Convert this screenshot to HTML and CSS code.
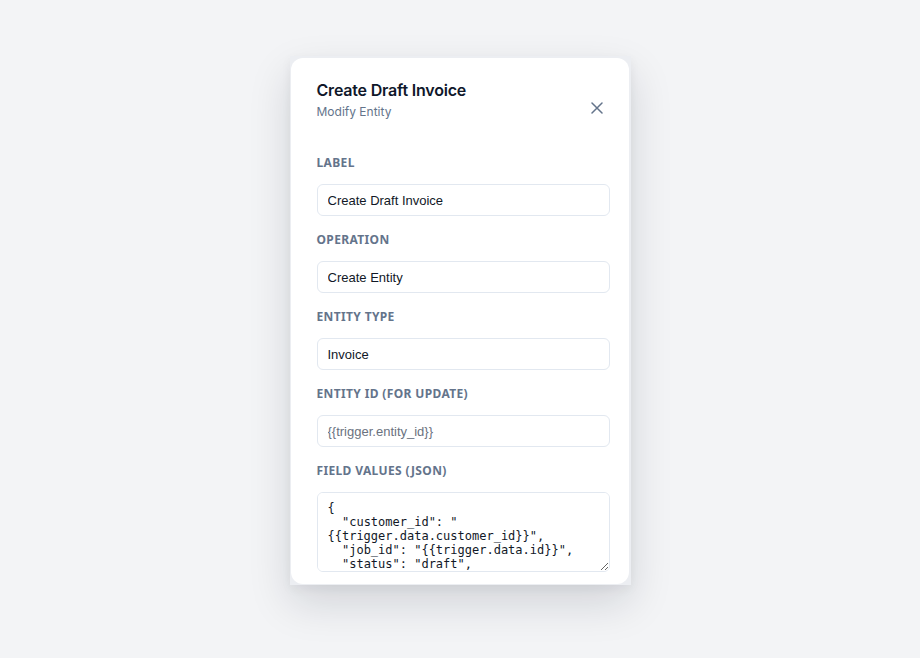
FILE: index.html
```html
<!DOCTYPE html>
<html lang="en">
<head>
  <meta charset="UTF-8">
  <title>Create Draft Invoice</title>
  <link rel="stylesheet" href="styles.css">
</head>

<body>

<div class="modal-frame">
  <div class="modal">
    <div class="modal-header">
      <div>
        <h2>Create Draft Invoice</h2>
        <p class="subtitle">Modify Entity</p>
      </div>
      <button type="button" class="close-btn" aria-label="Close">
        <svg width="12" height="12" viewBox="0 0 12 12" fill="none">
          <path d="M1 1L11 11M11 1L1 11" stroke="#64748b" stroke-width="1.5" stroke-linecap="round"/>
        </svg>
      </button>
    </div>

    <div class="modal-body">
      <div class="field">
        <label for="label">Label</label>
        <input type="text" id="label" value="Create Draft Invoice">
      </div>

      <div class="field">
        <label for="operation">Operation</label>
        <input type="text" id="operation" value="Create Entity">
      </div>

      <div class="field">
        <label for="entityType">Entity Type</label>
        <input type="text" id="entityType" value="Invoice">
      </div>

      <div class="field">
        <label for="entityId">Entity ID (for update)</label>
        <input type="text" id="entityId" placeholder="{{trigger.entity_id}}">
      </div>

      <div class="field">
        <label for="fieldValues">Field Values (JSON)</label>
        <textarea id="fieldValues" spellcheck="false">{
  "customer_id": "{{trigger.data.customer_id}}",
  "job_id": "{{trigger.data.id}}",
  "status": "draft",
  "due_days": 30
}</textarea>
      </div>
    </div>
  </div>
</div>

</body>
</html>
```

FILE: styles.css
```css
html, body {
  height: 100%;
}

body {
  font-family: 'Inter', sans-serif;
  background-color: #f3f4f6;
  margin: 0;
  padding: 0;
  overflow: hidden;
}

.modal-frame {
  width: 341px;
  margin: 56px auto 0;
  padding: 2px 2px 1px 1px;
  box-sizing: border-box;
  background-color: #eceef2;
  box-shadow: 0 18px 40px rgba(15, 23, 42, 0.14), 0 4px 10px rgba(15, 23, 42, 0.05);
}

.modal {
  background-color: #ffffff;
  border-radius: 12px;
  overflow: hidden;
}

/* Header: title, subtitle and close button */
.modal-header {
  display: flex;
  justify-content: space-between;
  align-items: flex-end;
  padding: 20px 19px 0 26px;
}

.modal-header h2 {
  margin: 0;
  font-size: 16px;
  line-height: 24px;
  font-weight: 600;
  letter-spacing: -0.2px;
  color: #0f172a;
}

.subtitle {
  margin: 1px 0 0;
  font-size: 12px;
  line-height: 18px;
  color: #64748b;
}

.close-btn {
  width: 24px;
  height: 24px;
  padding: 0;
  margin: 0 1px 1px 0;
  border: none;
  background: none;
  display: flex;
  align-items: center;
  justify-content: center;
  cursor: pointer;
}

.modal-body {
  padding: 33px 19px 12px 26px;
}

.field {
  margin-bottom: 15px;
}

.field:last-child {
  margin-bottom: 0;
}

label {
  display: block;
  font-family: 'Noto Sans', sans-serif;
  font-size: 12px;
  line-height: 16px;
  font-weight: bold;
  letter-spacing: 0.03em;
  text-transform: uppercase;
  color: #64748b;
  padding-top: 1px;
  margin-bottom: 13px;
}

input[type="text"] {
  width: 100%;
  height: 32px;
  padding: 0 10px;
  border: 1px solid #e2e8f0;
  border-radius: 6px;
  box-sizing: border-box;
  font-family: 'Liberation Sans', Arial, sans-serif;
  font-size: 13px;
  color: #111827;
  outline: none;
}

input::placeholder {
  color: #6b7280;
}

textarea {
  display: block;
  width: 100%;
  height: 80px;
  padding: 8px 10px;
  border: 1px solid #e2e8f0;
  border-radius: 6px;
  box-sizing: border-box;
  font-family: 'DejaVu Sans Mono', monospace;
  font-size: 12px;
  line-height: 14px;
  color: #111827;
  resize: vertical;
  outline: none;
}
```
